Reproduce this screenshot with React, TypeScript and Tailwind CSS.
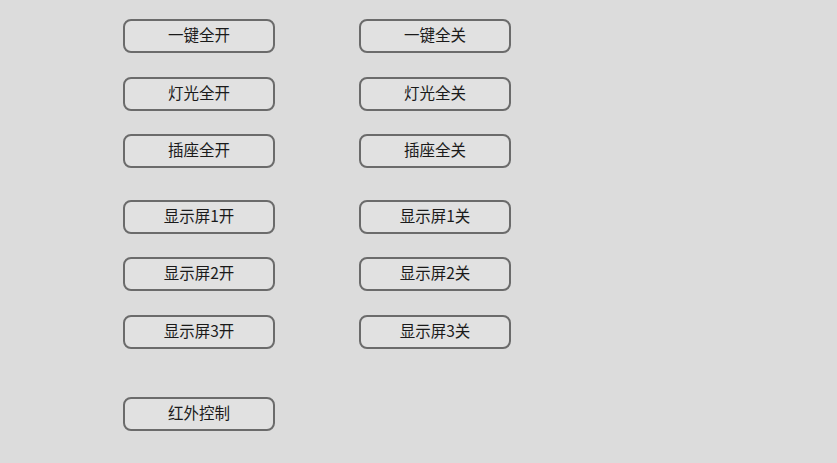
import React from "react";

function Btn({ label }: { label: string }) {
  return (
    <button className="w-[152px] h-[34px] rounded-[8px] border-2 border-[#6b6b6b] bg-[#e1e1e1] text-[15.5px] leading-none text-[#1a1a1a] flex items-center justify-center pb-[3px] [font-family:'Noto_Sans_CJK_SC',sans-serif]">
      {label}
    </button>
  );
}

export default function App() {
  return (
    <div className="w-[837px] h-[463px] bg-[#dcdcdc] pl-[123px] pt-[19px] overflow-hidden" style={{ fontFamily: "'Noto Sans CJK SC', sans-serif" }}>
      <div className="flex flex-col">
        <div className="flex gap-[84px]">
          <Btn label="一键全开" />
          <Btn label="一键全关" />
        </div>
        <div className="flex gap-[84px] mt-[24px]">
          <Btn label="灯光全开" />
          <Btn label="灯光全关" />
        </div>
        <div className="flex gap-[84px] mt-[23px]">
          <Btn label="插座全开" />
          <Btn label="插座全关" />
        </div>
        <div className="flex gap-[84px] mt-[32px]">
          <Btn label="显示屏1开" />
          <Btn label="显示屏1关" />
        </div>
        <div className="flex gap-[84px] mt-[23px]">
          <Btn label="显示屏2开" />
          <Btn label="显示屏2关" />
        </div>
        <div className="flex gap-[84px] mt-[24px]">
          <Btn label="显示屏3开" />
          <Btn label="显示屏3关" />
        </div>
        <div className="flex gap-[84px] mt-[48px]">
          <Btn label="红外控制" />
        </div>
      </div>
    </div>
  );
}
